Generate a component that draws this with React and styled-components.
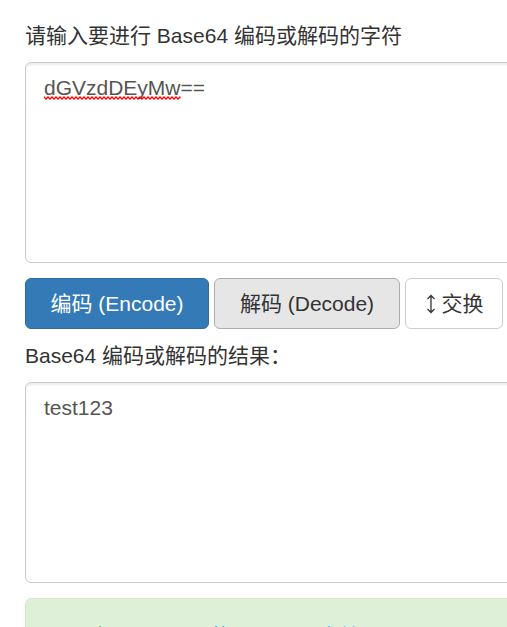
import React, { useState } from "react";
import styled, { createGlobalStyle, css } from "styled-components";

const GlobalStyle = createGlobalStyle`
  * { box-sizing: border-box; }
  html, body { margin: 0; overflow: hidden; }
  body {
    background: #fff;
    color: #333;
    font-family: "Liberation Sans", "Noto Sans CJK SC", sans-serif;
    font-size: 21px;
    line-height: 30px;
  }
  #root { height: 100vh; overflow: hidden; }
`;

const Page = styled.main`
  width: calc(100% + 24px);
  padding: 21px 0 0 25px;
`;

const Field = styled.section`
  display: flex;
  flex-direction: column;
  gap: 11px;
`;

const Label = styled.label`
  height: 30px;
  white-space: nowrap;
`;

const Box = styled.div`
  position: relative;
`;

const textMetrics = css`
  padding: 10px 18px;
  border: 1px solid transparent;
  font-family: inherit;
  font-size: 21px;
  line-height: 30px;
`;

const TextArea = styled.textarea`
  ${textMetrics}
  display: block;
  width: 100%;
  height: 201px;
  border-color: #ccc;
  border-radius: 6px;
  background: #fff;
  color: #555;
  box-shadow: inset 0 2px 2px rgba(0, 0, 0, 0.075);
  outline: none;
  resize: none;
`;

const SpellingMarks = styled.div`
  ${textMetrics}
  position: absolute;
  inset: 0;
  color: transparent;
  pointer-events: none;
  user-select: none;
`;

const Misspelled = styled.span`
  position: relative;
  display: inline-block;
`;

const Squiggle = styled.svg`
  position: absolute;
  left: 0;
  bottom: 3px;
  width: 100%;
  height: 4px;
`;

const Actions = styled.div`
  display: flex;
  gap: 5px;
  margin: 15px 0 12px;
`;

const tones = {
  primary: css`
    background: #337ab7;
    border-color: #2e6da4;
    color: #fff;
  `,
  active: css`
    background: #e6e6e6;
    border-color: #adadad;
    color: #333;
  `,
  plain: css`
    background: #fff;
    border-color: #ccc;
    color: #333;
  `,
};

const Button = styled.button`
  display: inline-flex;
  align-items: center;
  justify-content: center;
  gap: 5px;
  height: 51px;
  min-width: ${(p) => p.$width}px;
  padding: 0 18px;
  border: 1px solid;
  border-radius: 6px;
  font: inherit;
  white-space: nowrap;
  cursor: pointer;
  ${(p) => tones[p.$tone]}
`;

const SwapIcon = styled.svg`
  width: 12px;
  height: 20px;
`;

const Notice = styled.aside`
  margin-top: 15px;
  padding: 23px 18px 23px 64px;
  border: 1px solid #d6e9c6;
  border-radius: 6px;
  background: #dff0d8;
  color: #3c763d;
  white-space: nowrap;
`;

const NoticeLink = styled.a`
  color: #337ab7;
  text-decoration: none;
`;

export default function App() {
  const [input, setInput] = useState("dGVzdDEyMw==");
  const [output, setOutput] = useState("test123");

  const encode = () =>
    setOutput(btoa(String.fromCharCode(...new TextEncoder().encode(input))));
  const decode = () => {
    try {
      const bytes = Uint8Array.from(atob(input), (c) => c.charCodeAt(0));
      setOutput(new TextDecoder().decode(bytes));
    } catch {
      setOutput("");
    }
  };
  const swap = () => {
    setInput(output);
    setOutput(input);
  };

  return (
    <>
      <GlobalStyle />
      <Page>
        <Field>
          <Label htmlFor="source">请输入要进行 Base64 编码或解码的字符</Label>
          <Box>
            <TextArea
              id="source"
              spellCheck={false}
              value={input}
              onChange={(e) => setInput(e.target.value)}
            />
            {input === "dGVzdDEyMw==" && (
              <SpellingMarks aria-hidden="true">
                <Misspelled>
                  dGVzdDEyMw
                  <Squiggle>
                    <defs>
                      <pattern id="wave" width="4" height="4" patternUnits="userSpaceOnUse">
                        <path d="M-1 2 0 1 2 3 4 1 5 2" fill="none" stroke="#f00" strokeWidth="1.4" />
                      </pattern>
                    </defs>
                    <rect width="100%" height="4" fill="url(#wave)" />
                  </Squiggle>
                </Misspelled>
              </SpellingMarks>
            )}
          </Box>
        </Field>
        <Actions>
          <Button type="button" $tone="primary" $width={184} onClick={encode}>编码 (Encode)</Button>
          <Button type="button" $tone="active" $width={186} onClick={decode}>解码 (Decode)</Button>
          <Button type="button" $tone="plain" $width={98} onClick={swap}>
            <SwapIcon viewBox="0 0 12 20" fill="none" stroke="currentColor" strokeWidth="1.3" aria-hidden="true">
              <path d="M6 1.5v17M2.5 5 6 1.5 9.5 5M2.5 15 6 18.5 9.5 15" />
            </SwapIcon>
            交换
          </Button>
        </Actions>
        <Field>
          <Label htmlFor="result">Base64 编码或解码的结果：</Label>
          <TextArea
            id="result"
            spellCheck={false}
            value={output}
            onChange={(e) => setOutput(e.target.value)}
          />
        </Field>
        <Notice>
          文，Base64 <NoticeLink href="#about">节 Base64: 文档</NoticeLink>
        </Notice>
      </Page>
    </>
  );
}
